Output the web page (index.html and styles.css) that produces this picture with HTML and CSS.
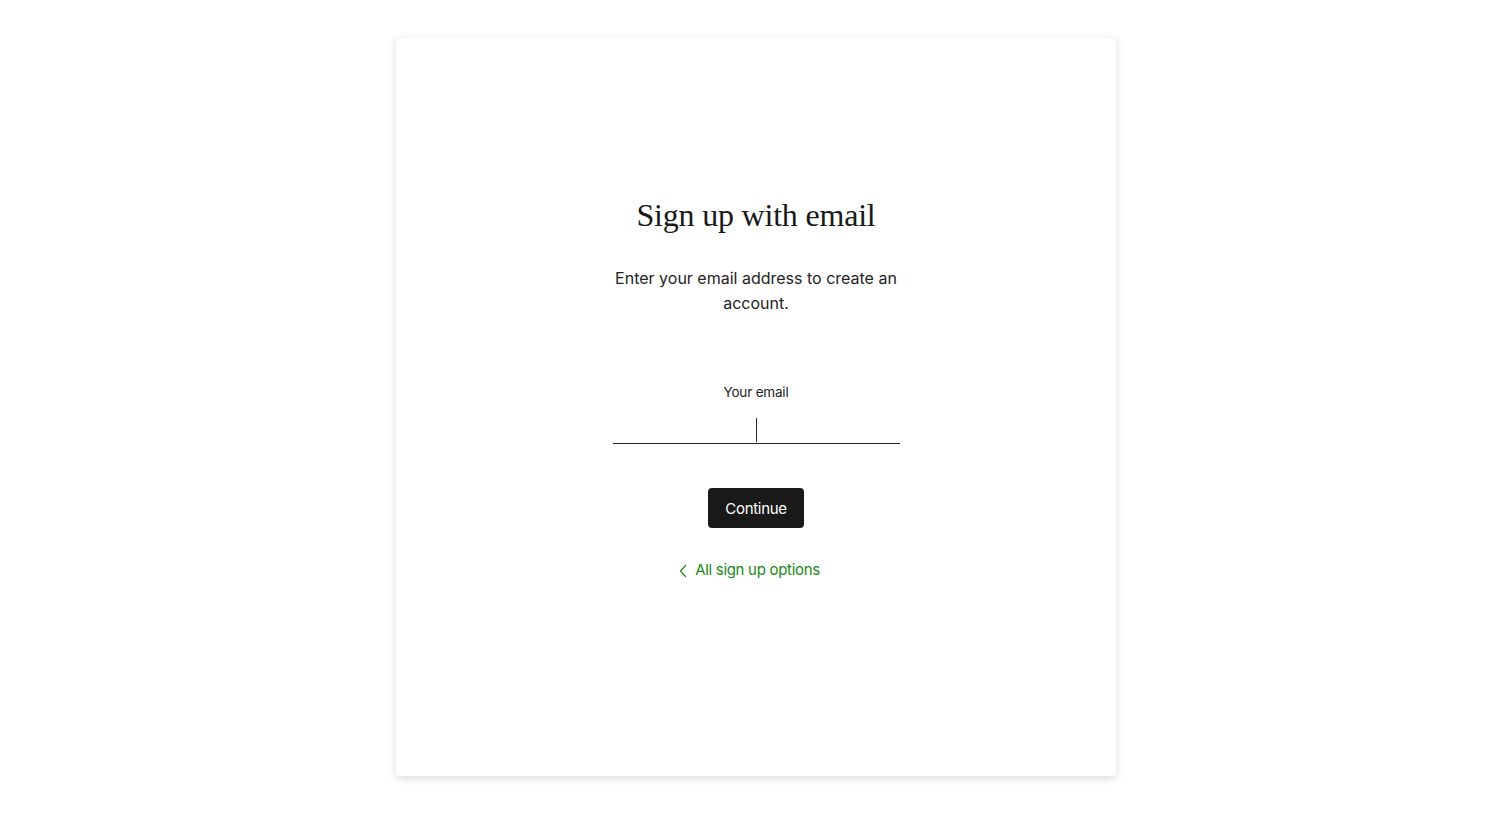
FILE: index.html
```html
<!DOCTYPE html>
<html lang="en">
<head>
<meta charset="utf-8">
<title>Sign up with email</title>
<link rel="stylesheet" href="styles.css">
</head>
<body>
<main class="page">
  <section class="card">
    <h1 class="title">Sign up with email</h1>
    <p class="lead">Enter your email address to create an account.</p>
    <form class="form">
      <label class="label" for="email">Your email</label>
      <div class="field">
        <input id="email" class="input" type="email" autofocus>
        <span class="caret"></span>
      </div>
      <button type="button" class="button">Continue</button>
    </form>
    <a class="back" href="#">
      <svg class="chev" width="10" height="16" viewBox="0 0 10 16" aria-hidden="true"><path d="M7.5 2.5 L2.5 8 L7.5 13.5" fill="none" stroke="currentColor" stroke-width="1.2" stroke-linecap="round" stroke-linejoin="round"/></svg>
      <span>All sign up options</span>
    </a>
  </section>
</main>
</body>
</html>
```
FILE: styles.css
```css
* { box-sizing: border-box; }
html, body { margin: 0; padding: 0; background: #fff; }
body { font-family: "Inter", "Liberation Sans", sans-serif; color: #242424; }
.page {
  display: flex;
  justify-content: center;
  padding: 38px 0;
}
.card {
  width: 720px;
  height: 738px;
  background: #fff;
  border-radius: 4px;
  box-shadow: 0 2px 10px rgba(0, 0, 0, 0.15);
  display: flex;
  flex-direction: column;
  align-items: center;
  padding-top: 158px;
}
.title {
  margin: 0;
  font-family: "Liberation Serif", "DejaVu Serif", serif;
  font-weight: 400;
  font-size: 32px;
  line-height: 38px;
  color: #191919;
  letter-spacing: -0.2px;
}
.lead {
  margin: 32px 0 0;
  width: 290px;
  text-align: center;
  font-size: 16px;
  line-height: 25px;
  color: #242424;
}
.form {
  margin-top: 66px;
  display: flex;
  flex-direction: column;
  align-items: center;
}
.label {
  font-size: 13.5px;
  line-height: 20px;
  letter-spacing: -0.2px;
  color: #242424;
}
.field {
  position: relative;
  margin-top: 10px;
  width: 287px;
  height: 32px;
  border-bottom: 1px solid #242424;
}
.input {
  width: 100%;
  height: 100%;
  border: none;
  outline: none;
  background: transparent;
  text-align: center;
  font-size: 16px;
  caret-color: transparent;
}
.caret {
  position: absolute;
  left: 143px;
  top: 6px;
  width: 1px;
  height: 24px;
  background: #242424;
}
.button {
  margin-top: 44px;
  width: 96px;
  height: 40px;
  border: none;
  border-radius: 4px;
  background: #191919;
  color: #fff;
  font-family: inherit;
  font-size: 15px;
  letter-spacing: -0.3px;
  cursor: pointer;
}
.back {
  margin-top: 32px;
  margin-left: -14px;
  display: flex;
  align-items: center;
  gap: 7px;
  color: #1a8917;
  text-decoration: none;
  font-size: 15px;
  letter-spacing: -0.3px;
  line-height: 20px;
}
.chev { display: block; margin-top: 2px; }
```
